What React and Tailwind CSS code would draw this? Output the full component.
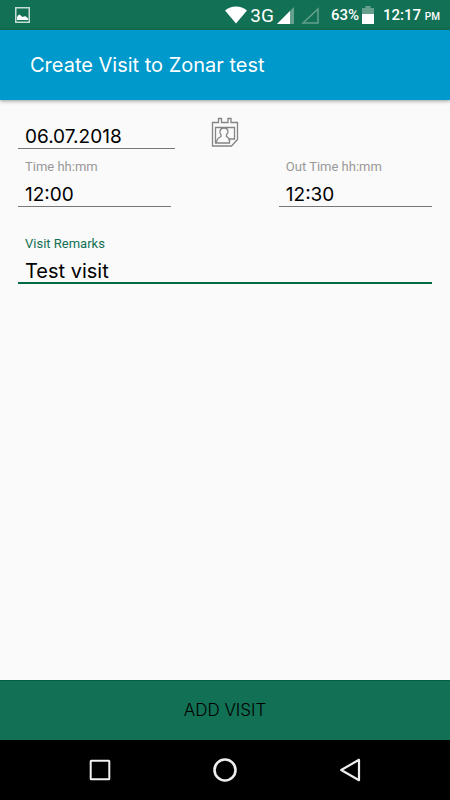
const fieldLabel = "block pt-px pl-[7px] font-['Roboto',sans-serif] text-[13px] leading-[17px]"
const fieldInput = "block h-8 w-full bg-transparent pt-2 pl-[7px] text-black outline-none"

function StatusBar() {
  return (
    <div className="flex h-[30px] items-center bg-[#127054] pr-[10px] pl-[15px] font-['Roboto',sans-serif] text-white">
      <svg className="mr-auto" width="15" height="16" viewBox="0 0 15 16">
        <rect x="0.75" y="0.75" width="13.5" height="14.5" fill="none" stroke="#c6ddd3" strokeWidth="1.5" />
        <path d="M2 13V10.2L3 8.4L4.5 7.6L6 8.8L7.5 10L9.5 9.2L11 9.6L13 11.4V13Z" fill="#fff" />
      </svg>

      {/* Signal */}
      <svg width="22" height="18" viewBox="0 0 22 18">
        <path d="M0 4.5C6-0.9 16-0.9 22 4.5L11 17.5Z" fill="#fff" />
      </svg>
      <span className="ml-[3px] text-[19px] leading-none">3G</span>
      <svg className="ml-[3px]" width="17" height="17" viewBox="0 0 17 17">
        <path d="M0 17L17 0V17Z" fill="#64a08c" />
        <path d="M0 17L13 4V17Z" fill="#fff" />
      </svg>
      <svg className="ml-[7px]" width="18" height="17" viewBox="0 0 18 17">
        <path d="M2 16L17 2V16Z" fill="none" stroke="#64a08c" strokeWidth="1.5" />
      </svg>

      {/* Battery and clock */}
      <span className="ml-3 text-[15px] leading-none font-medium">63%</span>
      <svg className="ml-[3px]" width="12" height="18" viewBox="0 0 12 18">
        <path d="M0 2H3.5V0H8.5V2H12V8H0Z" fill="#64a08c" />
        <path d="M0 8H12V18H0Z" fill="#fff" />
      </svg>
      <span className="ml-[9px] text-[15px] leading-none font-medium">
        12:17 <span className="text-[10px]">PM</span>
      </span>
    </div>
  )
}

function CalendarIcon() {
  return (
    <svg width="28" height="30" viewBox="0 0 28 30" fill="none" stroke="#858585" strokeWidth="1.3">
      <path d="M1.5 5.5H7.5V1.5H10.5V5.5H17V1.5H20V5.5H26.5V22.5L20.5 29H1.5Z" />
      <path d="M4.5 10.5H23.5V22H18.5V26H4.5Z" />
      <path d="M5.5 26C5.5 22.5 6.5 21 10 19.5V17.5C8 16 8.5 11 13 11C17.5 11 18 15.5 15.5 17.5V19.5C17.5 20.5 18.5 21.5 18.5 24" />
    </svg>
  )
}

function NavBar() {
  return (
    <nav className="flex h-[60px] items-center justify-center gap-[101px] bg-black" aria-label="System">
      <button type="button" aria-label="Recent apps">
        <svg width="24" height="24" viewBox="0 0 24 24" fill="none" stroke="#f2f0f0" strokeWidth="2">
          <rect x="2.7" y="2.7" width="18.6" height="18.6" rx="0.5" />
        </svg>
      </button>
      <button type="button" aria-label="Home">
        <svg width="24" height="24" viewBox="0 0 24 24" fill="none" stroke="#eeeeee" strokeWidth="2.6">
          <circle cx="12" cy="12" r="10.5" />
        </svg>
      </button>
      <button type="button" aria-label="Back">
        <svg width="24" height="24" viewBox="0 0 24 24" fill="none" stroke="#eeeeee" strokeWidth="2.2" strokeLinejoin="round">
          <path d="M3.2 12L21 1.8V22.2Z" />
        </svg>
      </button>
    </nav>
  )
}

export default function App() {
  return (
    <div className="flex min-h-screen flex-col bg-[#fafafa] font-['Inter',sans-serif]">
      <StatusBar />

      <header className="relative flex h-[70px] items-center bg-[#0099cc] px-[30px] shadow-[0_1px_4px_rgba(0,0,0,0.4)]">
        <h1 className="text-[20px] text-white">Create Visit to Zonar test</h1>
      </header>

      <form className="flex flex-1 flex-col">
        <div className="flex-1 px-[18px] pt-[17px]">
          {/* Date */}
          <div className="flex gap-9">
            <div className="w-[38%]">
              <input className={`${fieldInput} border-b border-[#777777] text-[19px]`} type="text" aria-label="Visit date" defaultValue="06.07.2018" />
            </div>
            <button type="button" aria-label="Pick a date" className="self-start">
              <CalendarIcon />
            </button>
          </div>

          {/* Times */}
          <div className="mt-2 flex justify-between">
            <div className="w-[37%]">
              <label htmlFor="time-in" className={`${fieldLabel} text-[#999999]`}>Time hh:mm</label>
              <input id="time-in" className={`${fieldInput} border-b border-[#777777] text-[19px]`} type="text" defaultValue="12:00" />
            </div>
            <div className="w-[37%]">
              <label htmlFor="time-out" className={`${fieldLabel} text-[#999999]`}>Out Time hh:mm</label>
              <input id="time-out" className={`${fieldInput} border-b border-[#777777] text-[19px]`} type="text" defaultValue="12:30" />
            </div>
          </div>

          {/* Remarks */}
          <div className="mt-[27px]">
            <label htmlFor="remarks" className={`${fieldLabel} text-[#127054]`}>Visit Remarks</label>
            <input id="remarks" className={`${fieldInput} border-b-2 border-[#006b43] text-[20px]`} type="text" defaultValue="Test visit" />
          </div>
        </div>

        <button type="button" className="h-[60px] w-full border-t border-[#006040] bg-[#127054] text-[17px] font-light text-black">
          ADD VISIT
        </button>
      </form>

      <NavBar />
    </div>
  )
}
